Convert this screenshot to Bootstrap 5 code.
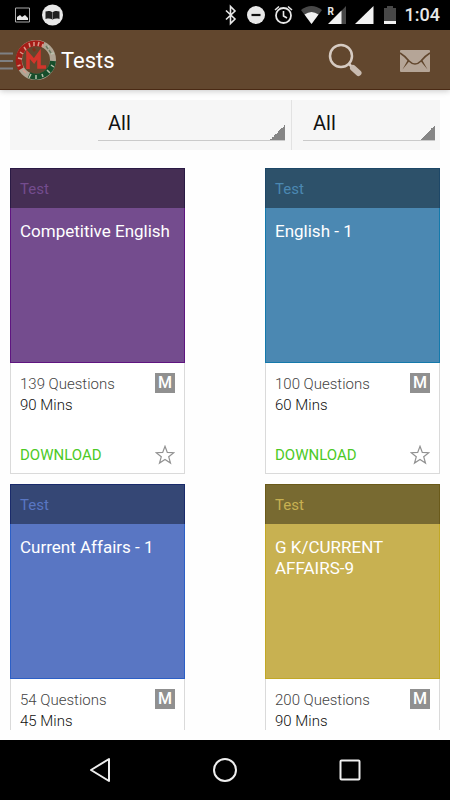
<!DOCTYPE html>
<html lang="en">
<head>
<meta charset="utf-8">
<meta name="viewport" content="width=device-width, initial-scale=1">
<title>Tests</title>
<link href="https://cdn.jsdelivr.net/npm/bootstrap@5.3.0/dist/css/bootstrap.min.css" rel="stylesheet">
<style>
body{font-family:Roboto,"Liberation Sans",sans-serif;background:#fefefe;color:#111}
.screen{height:100vh}
.status-bar{height:30px;padding-right:10px;font-size:18px;line-height:30px;color:#e8e8e8}
.app-bar{height:60px;padding-top:2px;background:#62472e;border-bottom:1px solid #4a2a14;box-shadow:0 1px 6px rgba(0,0,0,.22)}
.app-bar h1{font-size:22px;line-height:30px;font-weight:400;padding-left:1px}
.mail-btn{margin:0 20px 0 36px}
.filters{background:#f6f6f6;height:50px;margin-bottom:18px}
.filter-a{flex:0 0 282px;padding-left:88px;padding-right:6px;border-right:1px solid #e2e2e2}
.filter-b{padding-left:11px;padding-right:5px}
.spinner-select{appearance:none;display:block;width:100%;height:31px;margin-top:10px;padding:0 10px 4px;border:0;border-bottom:1px solid #cacaca;border-radius:0;color:#111;font-size:20px;line-height:24px;
background:linear-gradient(135deg,transparent 50%,#858585 50%) right bottom/15px 15px no-repeat}
.content{padding:10px 10px 0;margin-bottom:10px;min-height:0}
.tests{row-gap:10px}
.test-card{width:175px;height:306px;border:0;border-radius:0;background:#fff}
.kind{height:40px;padding:9px;font-size:15px;line-height:22px;border:1px solid var(--edge-dark);background:var(--dark);color:var(--main);border-bottom:0}
.cover{height:155px;padding:13px 9px;border:1px solid var(--edge);border-top:0;background:var(--main);color:#fff}
.cover h2{font-size:17px;line-height:21px;font-weight:400}
.info{padding:11px 9px 8px;border:1px solid #dadada;border-top:0;font-size:15px;line-height:21px;font-weight:300}
.count{color:#444}
.mode{width:20px;height:20px;margin-top:-1px;background:#909090;color:#fff;font-size:16px;line-height:20px;font-weight:500}
.download{font-size:15px;line-height:21px;font-weight:400;color:#4cc926}
.purple{--main:#744c8e;--dark:#452e54;--edge:#5f1580;--edge-dark:#2a1a44}
.teal{--main:#4b88b2;--dark:#2d516a;--edge:#1479ab;--edge-dark:#1d4767}
.blue{--main:#5976c3;--dark:#354775;--edge:#2c5fc6;--edge-dark:#1a2b6b}
.gold{--main:#c8b151;--dark:#786a31;--edge:#c2a826;--edge-dark:#6a5a1a}
.nav-bar{height:60px;gap:95px}
.icon-btn{background:none;border:0;padding:0;line-height:0}
svg{display:block}
</style>
<script src="https://cdn.jsdelivr.net/npm/bootstrap@5.3.0/dist/js/bootstrap.bundle.min.js"></script>
</head>
<body>
<svg width="0" height="0" class="position-absolute" aria-hidden="true"><symbol id="star" viewBox="0 0 20 20"><path d="M10 1.300L12.300 7.400L18.800 7.700L13.700 11.700L15.500 18L10 14.400L4.500 18L6.300 11.700L1.200 7.700L7.700 7.400Z" fill="none" stroke="#929292" stroke-width="1.200"/></symbol></svg>
<div class="screen d-flex flex-column overflow-hidden">
<div class="status-bar bg-black d-flex align-items-center justify-content-between flex-shrink-0">
<svg width="70" height="30" viewBox="0 0 70 30" aria-hidden="true"><path d="M15.500 8h14v14h-14z" fill="none" stroke="#aaa"/><path d="M17 20v-3l3-2 2 2 3-2 3 3v2z" fill="#e8e8e8"/><circle cx="52.500" cy="15" r="10.500" fill="#e8e8e8"/><path d="M45.500 11.500c3-1 5-.5 7 .8 2-1.300 4-1.800 7-.8V19c-3-.8-5-.5-7 .5-2-1-4-1.300-7-.5z" fill="#222"/><path d="M52.500 12v7" stroke="#777"/></svg>
<div class="d-flex align-items-center">
<svg width="182" height="30" viewBox="220 0 182 30" aria-hidden="true"><path d="M227 10.500l9 8.500-4.500 4.500v-17L236 11l-9 8.500" fill="none" stroke="#e8e8e8" stroke-width="1.600"/><circle cx="257" cy="15" r="9" fill="#e8e8e8"/><path d="M252.500 15h9" stroke="#111" stroke-width="2.200"/><circle cx="284.500" cy="15.500" r="7.500" fill="none" stroke="#e8e8e8" stroke-width="1.800"/><path d="M284.500 11v5l3.500 2M276 10l4-3.500M293 10l-4-3.500" fill="none" stroke="#e8e8e8" stroke-width="1.600"/><path d="M302 10q10.500-8 21 0L312.500 24z" fill="#484848"/><path d="M305.500 14.500q7-5 14 0l-7 9.500z" fill="#f2f2f2"/><path d="M347 6v18h-9V15.500z" fill="#484848"/><path d="M342.500 10.500V24H329z" fill="#f2f2f2"/><text x="328.500" y="15" font-size="10" font-weight="700" fill="#e8e8e8">R</text><path d="M374.500 6v18H356z" fill="#f2f2f2"/><path d="M385 8h3V6h6v2h3v16h-12z" fill="#484848"/><path d="M385 21h12v3h-12z" fill="#f2f2f2"/></svg>
<span class="ms-1 fw-medium">1:04</span></div>
</div>
<header class="app-bar d-flex align-items-center flex-shrink-0 position-relative">
<button class="icon-btn" aria-label="Open menu"><svg width="60" height="50" viewBox="0 0 60 50"><path d="M0 17.500h13M0 25h13M0 32.500h13" stroke="#7e8083" stroke-width="2"/><circle cx="36" cy="24" r="17" fill="none" stroke="#b0a594" stroke-width="6"/><path d="M21 33A17 17 0 0 1 43 9" fill="none" stroke="#a51d17" stroke-width="6"/><path d="M53 25A17 17 0 0 1 29 39" fill="none" stroke="#174e2b" stroke-width="6"/><path d="M23 34l3 3M20.500 29l-3 1M18 22l4 1M20 16l3 2M24 11l2 3M29 7l1 4M34 6v4M39 6l-1 4M43 8l-1 3" stroke="#d99a8c" stroke-width="1.500"/><path d="M47 12l2-2M51 18l3-1M51 29l3 2M47 34l3 3M42 38l1 3M36 39v4M31 38l-2 4" stroke="#b9c0ac" stroke-width="1.500"/><path d="M46 10l2 3M49 14l2 3" stroke="#6b7a62" stroke-width="1.500"/><path d="M28 33V18l6 7 5-7v13h7" fill="none" stroke="#d2352b" stroke-width="3.600"/><path d="M32 13l2-2 2 3-2 2z" fill="#7d2e1a"/></svg></button>
<h1 class="m-0 text-white">Tests</h1>
<button class="icon-btn ms-auto" aria-label="Search"><svg width="36" height="36" viewBox="0 0 36 36"><circle cx="13" cy="13" r="11" fill="none" stroke="#d6cbc2" stroke-width="2.500"/><path d="M20.500 20.500l4 4" stroke="#d6cbc2" stroke-width="2.500"/><path d="M25 25l5.500 5" stroke="#c8bbb0" stroke-width="6" stroke-linecap="round"/></svg></button>
<button class="icon-btn mail-btn" aria-label="Messages"><svg width="30" height="22" viewBox="0 0 30 22"><rect width="30" height="22" rx="1" fill="#b5a597"/><path d="M0 3q5 3 9 8 6 6 12 0 4-5 9-8" fill="none" stroke="#62472e" stroke-width="1.600"/><path d="M2.500 19.500l5.500-10 1.500 1.500zM27.500 19.500l-5.500-10-1.500 1.500z" fill="#62472e"/></svg></button>
</header>
<main class="content flex-grow-1 overflow-hidden">
<form class="filters d-flex">
<div class="filter-a"><select class="spinner-select" aria-label="Category"><option>All</option></select></div>
<div class="filter-b flex-grow-1"><select class="spinner-select" aria-label="Type"><option>All</option></select></div>
</form>
<div class="tests d-flex flex-wrap justify-content-between">
<article class="test-card card purple"><div class="kind">Test</div><div class="cover"><h2 class="m-0">Competitive English</h2></div><div class="info flex-grow-1 d-flex flex-column justify-content-between"><div class="d-flex justify-content-between"><div><div class="count">139 Questions</div><div>90 Mins</div></div><span class="mode text-center">M</span></div><div class="d-flex justify-content-between align-items-center"><button class="icon-btn download">DOWNLOAD</button><button class="icon-btn" aria-label="Favourite"><svg width="20" height="20"><use href="#star"/></svg></button></div></div></article>
<article class="test-card card teal"><div class="kind">Test</div><div class="cover"><h2 class="m-0">English - 1</h2></div><div class="info flex-grow-1 d-flex flex-column justify-content-between"><div class="d-flex justify-content-between"><div><div class="count">100 Questions</div><div>60 Mins</div></div><span class="mode text-center">M</span></div><div class="d-flex justify-content-between align-items-center"><button class="icon-btn download">DOWNLOAD</button><button class="icon-btn" aria-label="Favourite"><svg width="20" height="20"><use href="#star"/></svg></button></div></div></article>
<article class="test-card card blue"><div class="kind">Test</div><div class="cover"><h2 class="m-0">Current Affairs - 1</h2></div><div class="info flex-grow-1 d-flex flex-column justify-content-between"><div class="d-flex justify-content-between"><div><div class="count">54 Questions</div><div>45 Mins</div></div><span class="mode text-center">M</span></div></div></article>
<article class="test-card card gold"><div class="kind">Test</div><div class="cover"><h2 class="m-0">G K/CURRENT AFFAIRS-9</h2></div><div class="info flex-grow-1 d-flex flex-column justify-content-between"><div class="d-flex justify-content-between"><div><div class="count">200 Questions</div><div>90 Mins</div></div><span class="mode text-center">M</span></div></div></article>
</div>
</main>
<nav class="nav-bar bg-black d-flex justify-content-center align-items-center flex-shrink-0" aria-label="System">
<button class="icon-btn" aria-label="Back"><svg width="30" height="30" viewBox="0 0 30 30"><path d="M24 4v22L6 15z" fill="none" stroke="#eee" stroke-width="2" stroke-linejoin="round"/></svg></button>
<button class="icon-btn" aria-label="Home"><svg width="30" height="30" viewBox="0 0 30 30"><circle cx="15" cy="15" r="11" fill="none" stroke="#eee" stroke-width="2"/></svg></button>
<button class="icon-btn" aria-label="Recents"><svg width="30" height="30" viewBox="0 0 30 30"><rect x="5.500" y="5.500" width="19" height="19" rx="1" fill="none" stroke="#eee" stroke-width="2"/></svg></button>
</nav>
</div>
</body>
</html>
